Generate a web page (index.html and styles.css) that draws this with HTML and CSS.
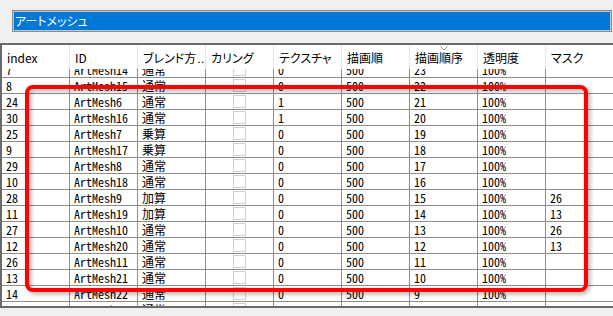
FILE: index.html
```html
<!DOCTYPE html>
<html lang="ja">
<head>
<meta charset="utf-8">
<link rel="stylesheet" href="styles.css">
</head>
<body>
<div class="page">
  <div class="search"><div class="sel">アートメッシュ</div></div>
  <div class="table">
    <div class="head">
      <div class="hc">index</div>
      <div class="hc">ID</div>
      <div class="hc">ブレンド方<span class="dots">...</span></div>
      <div class="hc">カリング</div>
      <div class="hc">テクスチャ</div>
      <div class="hc">描画順</div>
      <div class="hc sorted">描画順序<svg class="sort" width="8" height="5" viewBox="0 0 8 5"><polyline points="0.5,0.5 4,4 7.5,0.5" fill="none" stroke="#9a9a9a" stroke-width="1"/></svg></div>
      <div class="hc">透明度</div>
      <div class="hc">マスク</div>
    </div>
    <div class="viewport">
      <div class="rows">
        <div class="row"><div class="c">7</div><div class="c">ArtMesh14</div><div class="c">通常</div><div class="c"><span class="cb"></span></div><div class="c">0</div><div class="c">500</div><div class="c">23</div><div class="c">100%</div><div class="c"></div></div>
        <div class="row"><div class="c">8</div><div class="c">ArtMesh15</div><div class="c">通常</div><div class="c"><span class="cb"></span></div><div class="c">0</div><div class="c">500</div><div class="c">22</div><div class="c">100%</div><div class="c"></div></div>
        <div class="row"><div class="c">24</div><div class="c">ArtMesh6</div><div class="c">通常</div><div class="c"><span class="cb"></span></div><div class="c">1</div><div class="c">500</div><div class="c">21</div><div class="c">100%</div><div class="c"></div></div>
        <div class="row"><div class="c">30</div><div class="c">ArtMesh16</div><div class="c">通常</div><div class="c"><span class="cb"></span></div><div class="c">1</div><div class="c">500</div><div class="c">20</div><div class="c">100%</div><div class="c"></div></div>
        <div class="row"><div class="c">25</div><div class="c">ArtMesh7</div><div class="c">乗算</div><div class="c"><span class="cb"></span></div><div class="c">0</div><div class="c">500</div><div class="c">19</div><div class="c">100%</div><div class="c"></div></div>
        <div class="row"><div class="c">9</div><div class="c">ArtMesh17</div><div class="c">乗算</div><div class="c"><span class="cb"></span></div><div class="c">0</div><div class="c">500</div><div class="c">18</div><div class="c">100%</div><div class="c"></div></div>
        <div class="row"><div class="c">29</div><div class="c">ArtMesh8</div><div class="c">通常</div><div class="c"><span class="cb"></span></div><div class="c">0</div><div class="c">500</div><div class="c">17</div><div class="c">100%</div><div class="c"></div></div>
        <div class="row"><div class="c">10</div><div class="c">ArtMesh18</div><div class="c">通常</div><div class="c"><span class="cb"></span></div><div class="c">0</div><div class="c">500</div><div class="c">16</div><div class="c">100%</div><div class="c"></div></div>
        <div class="row"><div class="c">28</div><div class="c">ArtMesh9</div><div class="c">加算</div><div class="c"><span class="cb"></span></div><div class="c">0</div><div class="c">500</div><div class="c">15</div><div class="c">100%</div><div class="c">26</div></div>
        <div class="row"><div class="c">11</div><div class="c">ArtMesh19</div><div class="c">加算</div><div class="c"><span class="cb"></span></div><div class="c">0</div><div class="c">500</div><div class="c">14</div><div class="c">100%</div><div class="c">13</div></div>
        <div class="row"><div class="c">27</div><div class="c">ArtMesh10</div><div class="c">通常</div><div class="c"><span class="cb"></span></div><div class="c">0</div><div class="c">500</div><div class="c">13</div><div class="c">100%</div><div class="c">26</div></div>
        <div class="row"><div class="c">12</div><div class="c">ArtMesh20</div><div class="c">通常</div><div class="c"><span class="cb"></span></div><div class="c">0</div><div class="c">500</div><div class="c">12</div><div class="c">100%</div><div class="c">13</div></div>
        <div class="row"><div class="c">26</div><div class="c">ArtMesh11</div><div class="c">通常</div><div class="c"><span class="cb"></span></div><div class="c">0</div><div class="c">500</div><div class="c">11</div><div class="c">100%</div><div class="c"></div></div>
        <div class="row"><div class="c">13</div><div class="c">ArtMesh21</div><div class="c">通常</div><div class="c"><span class="cb"></span></div><div class="c">0</div><div class="c">500</div><div class="c">10</div><div class="c">100%</div><div class="c"></div></div>
        <div class="row"><div class="c">14</div><div class="c">ArtMesh22</div><div class="c">通常</div><div class="c"><span class="cb"></span></div><div class="c">0</div><div class="c">500</div><div class="c">9</div><div class="c">100%</div><div class="c"></div></div>
        <div class="row"><div class="c">15</div><div class="c">ArtMesh23</div><div class="c">通常</div><div class="c"><span class="cb"></span></div><div class="c">0</div><div class="c">500</div><div class="c">8</div><div class="c">100%</div><div class="c"></div></div>
      </div>
    </div>
  </div>
  <div class="highlight"></div>
</div>
</body>
</html>
```

FILE: styles.css
```css
* { box-sizing: border-box; }
html, body {
  margin: 0;
  padding: 0;
  background: #f0f0f0;
  width: 613px;
  height: 316px;
  overflow: hidden;
}
.page {
  position: relative;
  width: 613px;
  height: 316px;
  padding-top: 10px;
  font-family: "Noto Sans CJK JP", sans-serif;
  font-size: 12px;
  color: #000;
}
.search {
  margin-left: 12px;
  width: 600px;
  height: 22px;
  border: 1px solid #8c8c8c;
  padding: 1px;
  background: #c4c4c4;
}
.sel {
  height: 18px;
  background: #0078d7;
  color: #fff;
  padding-left: 1px;
  line-height: 18px;
  font-size: 12px;
  font-feature-settings: "palt";
  white-space: nowrap;
}
.table {
  margin-top: 11px;
  width: 613px;
  height: 265px;
  border-top: 2px solid #6a6a6a;
  border-left: 2px solid #6a6a6a;
  border-bottom: 2px solid #6a6a6a;
  background: #fff;
  overflow: hidden;
}
.head {
  display: grid;
  grid-template-columns: repeat(9, 68px);
  height: 24px;
  background: #fff;
}
.hc {
  position: relative;
  border-right: 1px solid #e5e5e5;
  padding-left: 5px;
  padding-top: 4px;
  line-height: 18px;
  font-feature-settings: "palt";
  white-space: nowrap;
  overflow: hidden;
}
.dots {
  font-family: "Liberation Sans", sans-serif;
  letter-spacing: 0.5px;
  margin-left: 1px;
}
.sort {
  position: absolute;
  left: 30px;
  top: 1px;
}
.viewport {
  height: 237px;
  overflow: hidden;
}
.rows {
  margin-top: -7px;
}
.row {
  display: grid;
  grid-template-columns: repeat(9, 68px);
  height: 16px;
  border-bottom: 1px solid #8e8e8e;
}
.c {
  border-right: 1px solid #8e8e8e;
  padding-left: 4px;
  line-height: 15px;
  white-space: nowrap;
  overflow: hidden;
  font-family: "Noto Sans Mono CJK JP", "Noto Sans CJK JP", sans-serif;
  font-size: 12px;
  display: flex;
  align-items: center;
}
.cb {
  display: block;
  width: 13px;
  height: 13px;
  margin: 0 auto;
  position: relative;
  left: -2px;
  border: 1px solid #d0d0d0;
  background: #fff;
}
.highlight {
  position: absolute;
  left: 25px;
  top: 85px;
  width: 563px;
  height: 207px;
  border: 4px solid #ff0000;
  border-radius: 8px;
  filter: drop-shadow(2px 2px 2px rgba(0, 0, 0, 0.35));
}
```
